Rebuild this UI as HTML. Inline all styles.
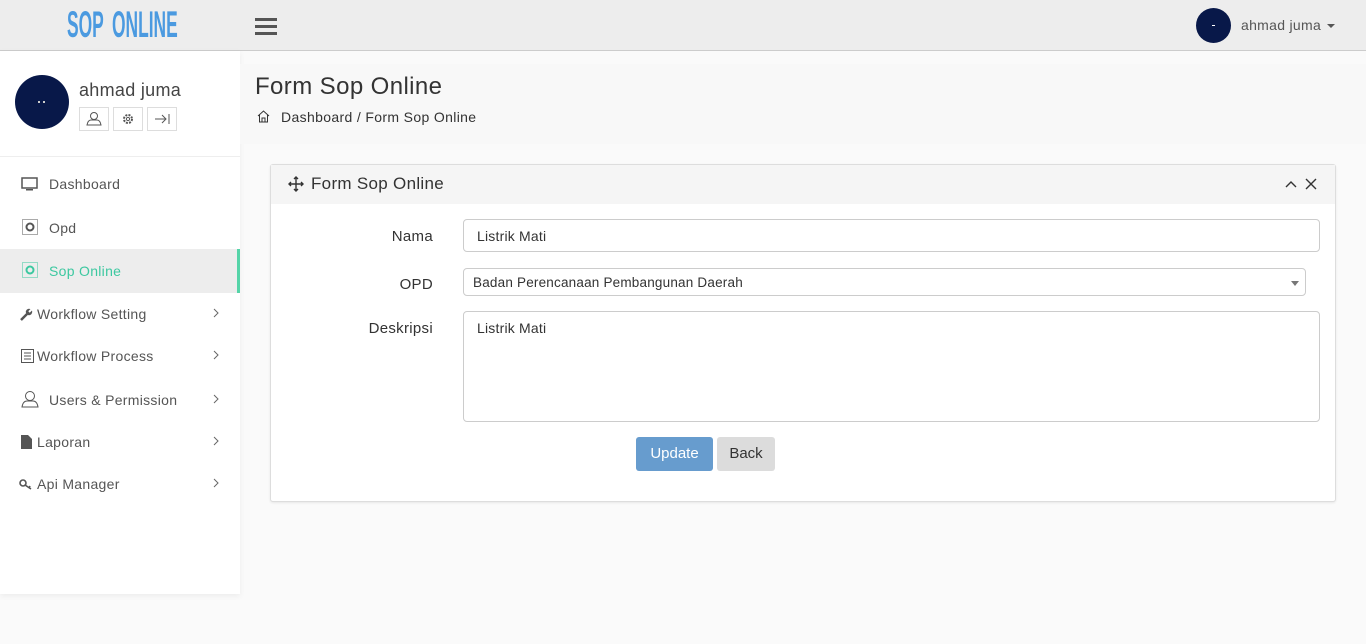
<!DOCTYPE html>
<html><head><meta charset="utf-8"><style>
*{box-sizing:border-box;margin:0;padding:0}
body{width:1366px;height:644px;background:#fafafa;font-family:"Liberation Sans",sans-serif;color:#333;position:relative;overflow:hidden;font-size:14px}
.a{position:absolute}
.top{left:0;top:0;width:1366px;height:51px;background:#ededed;border-bottom:1px solid #ccc}
.logo{left:67px;top:4px;font-family:"Liberation Sans Narrow","Liberation Sans",sans-serif;font-weight:bold;font-size:37px;color:#4b9ae0;transform:scaleX(0.47);transform-origin:left;white-space:nowrap;word-spacing:8px}
.side{left:0;top:51px;width:240px;height:543px;background:#fff;box-shadow:0 2px 6px rgba(0,0,0,.06)}
.nav{left:0;width:240px;height:44px;color:#555;font-size:14px;line-height:44px}
.nav span.t{position:absolute;left:49px;letter-spacing:.3px}
.nav .ch{position:absolute;left:213px;top:16px}
.ib{width:30px;height:24px;border:1px solid #ddd;top:107px;background:#fff}
.lbl{font-size:15px;color:#333;text-align:right;width:140px;letter-spacing:.3px}
.inp{border:1px solid #ccc;border-radius:4px;background:#fff;font-size:14px;color:#333;letter-spacing:.2px}
</style></head><body>
<div class="a top"></div>
<div class="a logo">SOP ONLINE</div>
<svg class="a" style="left:255px;top:18px" width="22" height="18"><rect y="0" width="22" height="3" fill="#555"/><rect y="7" width="22" height="3" fill="#555"/><rect y="14" width="22" height="3" fill="#555"/></svg>
<div class="a" style="left:1196px;top:8px;width:35px;height:35px;border-radius:50%;background:#081849"></div>
<div class="a" style="left:1212px;top:25px;width:3px;height:1px;background:#fff"></div>
<div class="a" style="left:1241px;top:17px;font-size:14px;color:#555;letter-spacing:.3px">ahmad juma</div>
<div class="a" style="left:1327px;top:24px;width:0;height:0;border-left:4px solid transparent;border-right:4px solid transparent;border-top:4px solid #555"></div>

<div class="a side"></div>
<div class="a" style="left:15px;top:75px;width:54px;height:54px;border-radius:50%;background:#081849"></div>
<div class="a" style="left:38px;top:101px;width:7px;height:2px;border-left:2px solid #ccc;border-right:2px solid #ccc"></div>
<div class="a" style="left:79px;top:80px;font-size:18px;color:#444;letter-spacing:.3px">ahmad juma</div>
<div class="a ib" style="left:79px"><svg width="28" height="22"><circle cx="14" cy="8" r="3.5" fill="none" stroke="#555"/><path d="M7 17 Q8 12 11 12 L17 12 Q20 12 21 17Z" fill="none" stroke="#555"/></svg></div>
<div class="a ib" style="left:113px"><svg width="28" height="22"><circle cx="14" cy="11" r="4" fill="none" stroke="#555" stroke-width="2" stroke-dasharray="2 1.2"/><circle cx="14" cy="11" r="1.6" fill="none" stroke="#555"/></svg></div>
<div class="a ib" style="left:147px"><svg width="28" height="22"><path d="M7 11H18M14 7L18 11L14 15M21 6V16" fill="none" stroke="#555"/></svg></div>
<div class="a" style="left:0;top:156px;width:240px;height:1px;background:#eee"></div>

<div class="a nav" style="top:162px"><svg class="a" style="left:21px;top:15px" width="17" height="14"><rect x="1" y="1" width="15" height="10" fill="none" stroke="#555" stroke-width="1.5"/><rect x="5" y="12" width="7" height="1.5" fill="#555"/></svg><span class="t">Dashboard</span></div>
<div class="a nav" style="top:206px"><svg class="a" style="left:22px;top:13px" width="16" height="16"><rect x=".5" y=".5" width="15" height="15" fill="none" stroke="#555" stroke-dasharray="1 1"/><circle cx="8" cy="8" r="3.5" fill="none" stroke="#555" stroke-width="2"/></svg><span class="t">Opd</span></div>
<div class="a nav" style="top:249px;background:#ededed;color:#3cc8a0"><svg class="a" style="left:22px;top:13px" width="16" height="16"><rect x=".5" y=".5" width="15" height="15" fill="none" stroke="#3cc8a0" stroke-dasharray="1 1"/><circle cx="8" cy="8" r="3.5" fill="none" stroke="#3cc8a0" stroke-width="2"/></svg><span class="t">Sop Online</span><div class="a" style="left:237px;top:0;width:3px;height:44px;background:#55d4a8"></div></div>
<div class="a nav" style="top:292px"><svg class="a" style="left:20px;top:16px" width="13" height="13"><path d="M1 12L7 6" stroke="#555" stroke-width="2.5"/><circle cx="9" cy="4" r="3.2" fill="#555"/><path d="M9 4L12 1" stroke="#fff" stroke-width="2"/></svg><span class="t" style="left:37px">Workflow Setting</span><svg class="ch" width="6" height="10"><path d="M1 1L5 5L1 9" fill="none" stroke="#666"/></svg></div>
<div class="a nav" style="top:334px"><svg class="a" style="left:21px;top:15px" width="13" height="14"><rect x=".5" y=".5" width="12" height="13" fill="none" stroke="#555"/><path d="M3 4H10M3 7H10M3 10H10" stroke="#555"/></svg><span class="t" style="left:37px">Workflow Process</span><svg class="ch" width="6" height="10"><path d="M1 1L5 5L1 9" fill="none" stroke="#666"/></svg></div>
<div class="a nav" style="top:378px"><svg class="a" style="left:21px;top:12px" width="18" height="18"><circle cx="9" cy="6" r="4.5" fill="none" stroke="#555"/><path d="M1 17 Q2 11 6 11 L12 11 Q16 11 17 17Z" fill="none" stroke="#555"/></svg><span class="t">Users &amp; Permission</span><svg class="ch" width="6" height="10"><path d="M1 1L5 5L1 9" fill="none" stroke="#666"/></svg></div>
<div class="a nav" style="top:420px"><svg class="a" style="left:21px;top:15px" width="11" height="14"><path d="M0 0H7L11 4V14H0Z" fill="#555"/></svg><span class="t" style="left:37px">Laporan</span><svg class="ch" width="6" height="10"><path d="M1 1L5 5L1 9" fill="none" stroke="#666"/></svg></div>
<div class="a nav" style="top:462px"><svg class="a" style="left:19px;top:17px" width="15" height="11"><circle cx="4" cy="4" r="3" fill="none" stroke="#555" stroke-width="1.6"/><path d="M6 6L12 10M10 9L11 7" stroke="#555" stroke-width="1.6"/></svg><span class="t" style="left:37px">Api Manager</span><svg class="ch" width="6" height="10"><path d="M1 1L5 5L1 9" fill="none" stroke="#666"/></svg></div>

<div class="a" style="left:240px;top:64px;width:1126px;height:80px;background:#f8f8f8"></div>
<div class="a" style="left:255px;top:73px;font-size:24px;color:#333;letter-spacing:.4px">Form Sop Online</div>
<svg class="a" style="left:257px;top:110px" width="13" height="13"><path d="M1 6L6.5 1L12 6M2.5 5V12H10.5V5M5 12V8H8V12" fill="none" stroke="#333"/></svg>
<div class="a" style="left:281px;top:109px;font-size:14px;color:#333;letter-spacing:.35px">Dashboard / Form Sop Online</div>

<div class="a" style="left:270px;top:164px;width:1066px;height:338px;background:#fff;border:1px solid #ddd;border-radius:3px;box-shadow:0 1px 2px rgba(0,0,0,.08)"></div>
<div class="a" style="left:271px;top:165px;width:1064px;height:39px;background:#f5f5f5"></div>
<svg class="a" style="left:288px;top:176px" width="16" height="16"><path d="M8 1V15M1 8H15M6 3L8 1L10 3M6 13L8 15L10 13M3 6L1 8L3 10M13 6L15 8L13 10" fill="none" stroke="#333" stroke-width="1.4"/></svg>
<div class="a" style="left:311px;top:174px;font-size:17px;color:#333;letter-spacing:.3px">Form Sop Online</div>
<svg class="a" style="left:1285px;top:177px" width="36" height="14"><path d="M1 10L6 5L11 10M21 2L31 12M31 2L21 12" fill="none" stroke="#333" stroke-width="1.4"/></svg>

<div class="a lbl" style="left:293px;top:228px">Nama</div>
<div class="a inp" style="left:463px;top:219px;width:857px;height:33px;padding:8px 13px">Listrik Mati</div>
<div class="a lbl" style="left:293px;top:276px">OPD</div>
<div class="a inp" style="left:463px;top:268px;width:843px;height:28px;padding:6px 9px;font-size:13.5px">Badan Perencanaan Pembangunan Daerah</div>
<div class="a" style="left:1291px;top:281px;border-left:4px solid transparent;border-right:4px solid transparent;border-top:5px solid #777"></div>
<div class="a lbl" style="left:293px;top:320px">Deskripsi</div>
<div class="a inp" style="left:463px;top:311px;width:857px;height:111px;padding:8px 13px">Listrik Mati</div>
<div class="a" style="left:636px;top:437px;width:77px;height:34px;background:#679cce;border-radius:3px;color:#fff;font-size:15px;text-align:center;line-height:34px">Update</div>
<div class="a" style="left:717px;top:437px;width:58px;height:34px;background:#dcdcdc;border-radius:3px;color:#333;font-size:15px;text-align:center;line-height:34px">Back</div>
</body></html>
